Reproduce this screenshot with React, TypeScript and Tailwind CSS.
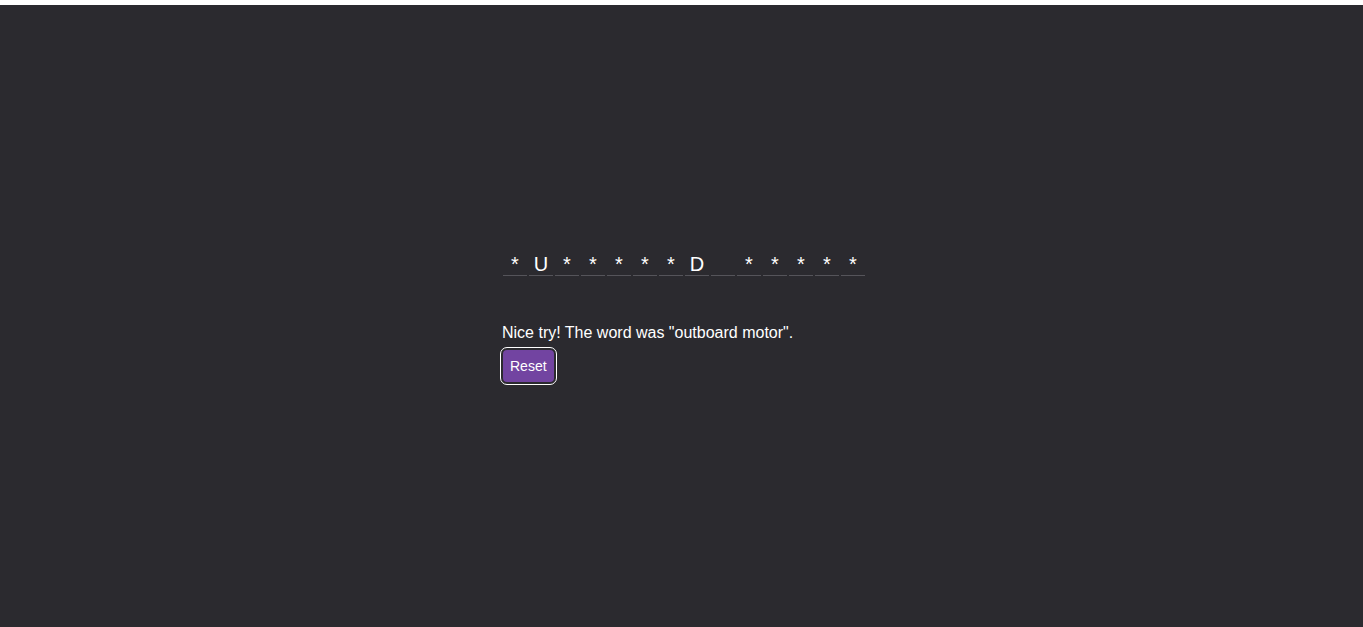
const WORD = "outboard motor";
const GUESSED = ["u", "d"];

function LetterSlot({ char }: { char: string }) {
  const shown = char === " " ? "" : GUESSED.includes(char) ? char.toUpperCase() : "*";
  return (
    <span className="flex h-[23px] w-[24px] items-start justify-center border-b border-[#55545a] text-[20px] leading-[22px] text-white">
      {shown}
    </span>
  );
}

export default function App() {
  return (
    <div className="min-h-screen border-t-[5px] border-white bg-[#2b2a2f] font-['Liberation_Sans',Arial,sans-serif] text-white">
      <div className="ml-[calc(50%-181.5px)] flex w-[370px] flex-col items-start pt-[248px]">
        <div className="ml-[3px] flex gap-[2px]">
          {WORD.split("").map((char, i) => (
            <LetterSlot key={i} char={char} />
          ))}
        </div>
        <p className="ml-[2px] mt-[48px] text-[16px] leading-[18px]">
          Nice try! The word was "outboard motor".
        </p>
        <button
          type="button"
          className="ml-[3px] mt-[8px] rounded-[4px] bg-[#7244a1] px-[7px] py-[8px] text-[14px] leading-[16px] text-white outline outline-1 outline-offset-2 outline-white"
        >
          Reset
        </button>
      </div>
    </div>
  );
}
